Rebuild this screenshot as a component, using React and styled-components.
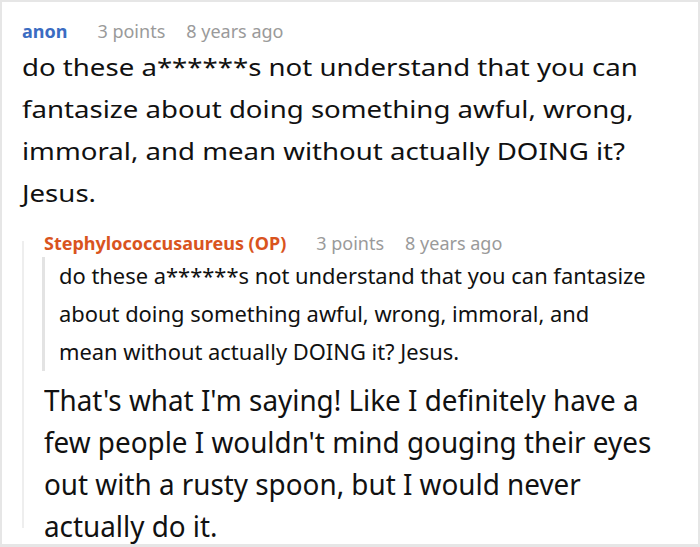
import React from "react";
import styled, { createGlobalStyle } from "styled-components";

const GlobalStyle = createGlobalStyle`
  html, body {
    margin: 0;
    padding: 0;
    background: #fff;
  }
  body {
    font-family: "Noto Sans", "Open Sans", sans-serif;
  }
`;

const Frame = styled.div`
  box-sizing: border-box;
  width: 700px;
  height: 547px;
  border: 2px solid #e6e6e6;
  border-bottom-width: 3px;
  overflow: hidden;
  padding: 14px 0 0 20px;
`;

const Meta = styled.div`
  display: flex;
  align-items: baseline;
  font-size: 18px;
  line-height: 30px;
  white-space: nowrap;
`;

const Author = styled.span`
  font-weight: 700;
  color: ${(p) => (p.$op ? "#d9541e" : "#3b6cc2")};
  margin-right: 30px;
`;

const Info = styled.span`
  color: #9a9a9a;
  margin-right: 21px;
`;

const Text = styled.div`
  margin-top: ${(p) => p.$top || 0}px;
  font-size: ${(p) => p.$size}px;
  line-height: ${(p) => p.$lh}px;
  color: #111;
`;

const Line = styled.div`
  white-space: nowrap;
  transform: scaleX(${(p) => p.$sx || 1});
  transform-origin: left center;
`;

const Reply = styled.div`
  position: relative;
  margin-top: 14px;
  padding-left: 22px;

  &::before {
    content: "";
    position: absolute;
    left: 0;
    top: 13px;
    width: 2px;
    height: 287px;
    background: #eeeeee;
  }
`;

const Quote = styled.blockquote`
  margin: -1px 0 0 -2px;
  border-left: 3px solid #e3e3e3;
  padding: 0 0 0 14px;
  font-size: 21px;
  line-height: 38px;
  color: #111;
`;

const lines = (arr, sx) => arr.map((t) => <Line key={t} $sx={sx}>{t}</Line>);

export default function App() {
  return (
    <>
      <GlobalStyle />
      <Frame>
        <Meta>
          <Author>anon</Author>
          <Info>3 points</Info>
          <Info>8 years ago</Info>
        </Meta>
        <Text $size={23} $lh={42}>
          {lines(
            [
              "do these a******s not understand that you can",
              "fantasize about doing something awful, wrong,",
              "immoral, and mean without actually DOING it?",
              "Jesus.",
            ],
            1.2
          )}
        </Text>
        <Reply>
          <Meta>
            <Author $op>Stephylococcusaureus (OP)</Author>
            <Info>3 points</Info>
            <Info>8 years ago</Info>
          </Meta>
          <Quote>
            {lines(
              [
                "do these a******s not understand that you can fantasize",
                "about doing something awful, wrong, immoral, and",
                "mean without actually DOING it? Jesus.",
              ],
              1.043
            )}
          </Quote>
          <Text $size={29} $lh={42} $top={8}>
            {lines(
              [
                "That's what I'm saying! Like I definitely have a",
                "few people I wouldn't mind gouging their eyes",
                "out with a rusty spoon, but I would never",
                "actually do it.",
              ],
              0.96
            )}
          </Text>
        </Reply>
      </Frame>
    </>
  );
}
